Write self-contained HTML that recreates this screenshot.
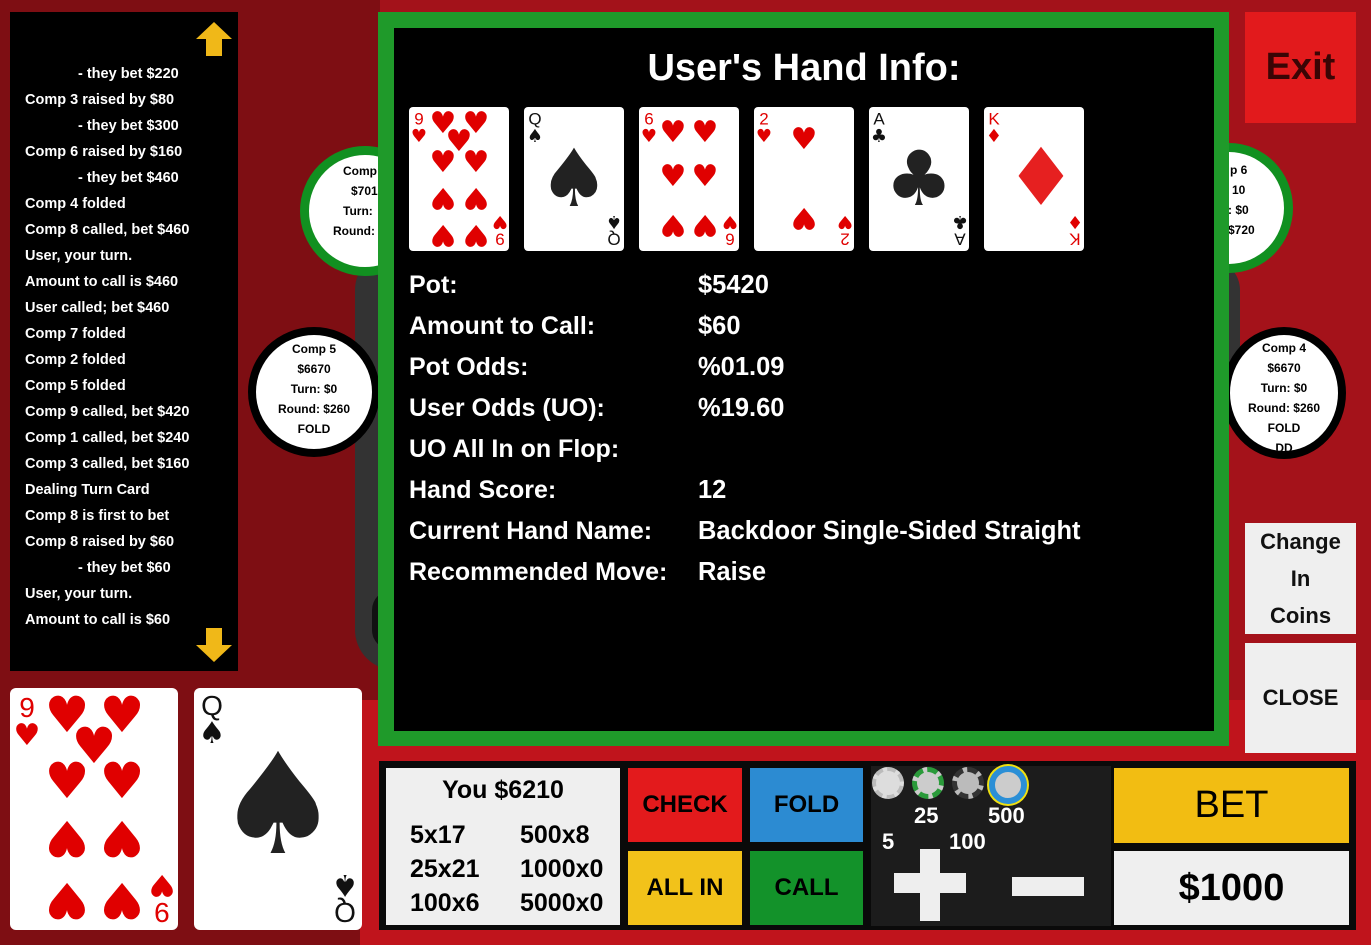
<!DOCTYPE html>
<html><head><meta charset="utf-8"><style>
*{margin:0;padding:0;box-sizing:border-box}
body{width:1371px;height:945px;overflow:hidden;position:relative;background:#a3121a;font-family:"Liberation Sans",Arial,sans-serif;font-weight:bold}
.a{position:absolute}
.log{left:10px;top:12px;width:228px;height:659px;background:#000;color:#fff;font-size:14.5px}
.log div{position:absolute;left:15px;white-space:nowrap}
.log .i{left:68px}
.circ{position:absolute;border-radius:50%;background:#fff;text-align:center;font-size:12px;color:#000;line-height:20px}
.card{position:absolute;background:#fff;border-radius:4px;overflow:hidden;font-family:"DejaVu Sans",sans-serif;font-weight:normal}
.card span{position:absolute;transform:translate(-50%,-50%);line-height:1}
.r{color:#e00000}.k{color:#111}
.flip{transform:translate(-50%,-50%) rotate(180deg)!important}
.row{position:absolute;left:409px;color:#fff;font-size:25px}
.val{position:absolute;left:698px;color:#fff;font-size:25.5px}
.btn{position:absolute;display:flex;align-items:center;justify-content:center;color:#000;font-size:24px}
</style></head><body>
<div class="a" style="left:0;top:0;width:380px;height:945px;background:#7e0e13"></div>
<div class="a" style="left:1230px;top:0;width:141px;height:945px;background:#a4121a"></div>
<div class="a" style="left:360px;top:700px;width:1011px;height:245px;background:#c0141c"></div>

<div class="a" style="left:355px;top:250px;width:40px;height:420px;background:#333;border-radius:40px 0 0 40px"></div>
<div class="a" style="left:1210px;top:260px;width:30px;height:150px;background:#333;border-radius:0 40px 40px 0"></div>

<div class="circ" style="left:300px;top:146px;width:130px;height:130px;border:9px solid #119020;padding-top:6px">
<div style="text-align:left;padding-left:34px">Comp</div><div style="text-align:left;padding-left:42px">$701</div><div style="text-align:left;padding-left:34px">Turn:</div><div style="text-align:left;padding-left:24px">Round: $</div></div>
<div class="circ" style="left:1165px;top:143px;width:128px;height:130px;border:9px solid #119020;padding-top:8px;text-align:left">
<div style="padding-left:56px">p 6</div><div style="padding-left:58px">10</div><div style="padding-left:54px">: $0</div><div style="padding-left:54px">$720</div></div>

<div class="circ" style="left:248px;top:327px;width:132px;height:130px;border:8px solid #000;padding-top:4px">Comp 5<br>$6670<br>Turn: $0<br>Round: $260<br>FOLD</div>
<div class="circ" style="left:1222px;top:327px;width:124px;height:132px;border:8px solid #000;padding-top:3px;overflow:hidden">Comp 4<br>$6670<br>Turn: $0<br>Round: $260<br>FOLD<br>DD</div>
<div class="a" style="left:372px;top:590px;width:20px;height:60px;background:#111;border-radius:20px 0 0 20px"></div>

<div class="a log">
<div class="i" style="top:54px">- they bet $220</div>
<div style="top:80px">Comp 3 raised by $80</div>
<div class="i" style="top:106px">- they bet $300</div>
<div style="top:132px">Comp 6 raised by $160</div>
<div class="i" style="top:158px">- they bet $460</div>
<div style="top:184px">Comp 4 folded</div>
<div style="top:210px">Comp 8 called, bet $460</div>
<div style="top:236px">User, your turn.</div>
<div style="top:262px">Amount to call is $460</div>
<div style="top:288px">User called; bet $460</div>
<div style="top:314px">Comp 7 folded</div>
<div style="top:340px">Comp 2 folded</div>
<div style="top:366px">Comp 5 folded</div>
<div style="top:392px">Comp 9 called, bet $420</div>
<div style="top:418px">Comp 1 called, bet $240</div>
<div style="top:444px">Comp 3 called, bet $160</div>
<div style="top:470px">Dealing Turn Card</div>
<div style="top:496px">Comp 8 is first to bet</div>
<div style="top:522px">Comp 8 raised by $60</div>
<div class="i" style="top:548px">- they bet $60</div>
<div style="top:574px">User, your turn.</div>
<div style="top:600px">Amount to call is $60</div>
<svg class="a" style="left:186px;top:10px" width="36" height="34"><polygon points="18,0 36,17 26,17 26,34 10,34 10,17 0,17" fill="#f0b818"/></svg>
<svg class="a" style="left:186px;top:616px" width="36" height="34"><polygon points="18,34 36,17 26,17 26,0 10,0 10,17 0,17" fill="#f0b818"/></svg>
</div>

<div class="a" style="left:378px;top:12px;width:851px;height:734px;background:#1f9a2a"></div>
<div class="a" style="left:394px;top:28px;width:820px;height:703px;background:#000"></div>
<div class="a" style="left:394px;top:47px;width:820px;text-align:center;color:#fff;font-size:38px">User's Hand Info:</div>

<div class="card" style="left:409px;top:107px;width:100px;height:144px">
<span class="r" style="left:10px;top:12px;font-family:'Liberation Sans';font-size:17px">9</span><span class="r" style="left:10px;top:30px;font-size:18px">♥</span>
<span class="r" style="left:34px;top:17px;font-size:30px">♥</span><span class="r" style="left:67px;top:17px;font-size:30px">♥</span><span class="r" style="left:50px;top:35px;font-size:30px">♥</span>
<span class="r" style="left:34px;top:56px;font-size:30px">♥</span><span class="r" style="left:67px;top:56px;font-size:30px">♥</span>
<span class="r flip" style="left:34px;top:90px;font-size:30px">♥</span><span class="r flip" style="left:67px;top:90px;font-size:30px">♥</span>
<span class="r flip" style="left:34px;top:127px;font-size:30px">♥</span><span class="r flip" style="left:67px;top:127px;font-size:30px">♥</span>
<span class="r flip" style="left:91px;top:114px;font-size:18px">♥</span><span class="r flip" style="left:91px;top:132px;font-family:'Liberation Sans';font-size:17px">9</span>
</div>
<div class="card" style="left:524px;top:107px;width:100px;height:144px">
<span class="k" style="left:11px;top:12px;font-family:'Liberation Sans';font-size:17px">Q</span><span class="k" style="left:11px;top:30px;font-size:18px">♠</span>
<span style="left:50px;top:72px;font-size:80px;color:#222">♠</span>
<span class="k flip" style="left:90px;top:114px;font-size:18px">♠</span><span class="k flip" style="left:90px;top:132px;font-family:'Liberation Sans';font-size:17px">Q</span>
</div>
<div class="card" style="left:639px;top:107px;width:100px;height:144px">
<span class="r" style="left:10px;top:12px;font-family:'Liberation Sans';font-size:17px">6</span><span class="r" style="left:10px;top:30px;font-size:18px">♥</span>
<span class="r" style="left:34px;top:26px;font-size:30px">♥</span><span class="r" style="left:66px;top:26px;font-size:30px">♥</span>
<span class="r" style="left:34px;top:70px;font-size:30px">♥</span><span class="r" style="left:66px;top:70px;font-size:30px">♥</span>
<span class="r flip" style="left:34px;top:117px;font-size:30px">♥</span><span class="r flip" style="left:66px;top:117px;font-size:30px">♥</span>
<span class="r flip" style="left:91px;top:114px;font-size:18px">♥</span><span class="r flip" style="left:91px;top:132px;font-family:'Liberation Sans';font-size:17px">6</span>
</div>
<div class="card" style="left:754px;top:107px;width:100px;height:144px">
<span class="r" style="left:10px;top:12px;font-family:'Liberation Sans';font-size:17px">2</span><span class="r" style="left:10px;top:30px;font-size:18px">♥</span>
<span class="r" style="left:50px;top:33px;font-size:30px">♥</span>
<span class="r flip" style="left:50px;top:110px;font-size:30px">♥</span>
<span class="r flip" style="left:91px;top:114px;font-size:18px">♥</span><span class="r flip" style="left:91px;top:132px;font-family:'Liberation Sans';font-size:17px">2</span>
</div>
<div class="card" style="left:869px;top:107px;width:100px;height:144px">
<span class="k" style="left:10px;top:12px;font-family:'Liberation Sans';font-size:17px">A</span><span class="k" style="left:10px;top:30px;font-size:18px">♣</span>
<span style="left:50px;top:72px;font-size:76px;color:#222">♣</span>
<span class="k flip" style="left:91px;top:114px;font-size:18px">♣</span><span class="k flip" style="left:91px;top:132px;font-family:'Liberation Sans';font-size:17px">A</span>
</div>
<div class="card" style="left:984px;top:107px;width:100px;height:144px">
<span class="r" style="left:10px;top:12px;font-family:'Liberation Sans';font-size:17px">K</span><span class="r" style="left:10px;top:30px;font-size:18px">♦</span>
<span style="left:57px;top:71px;font-size:80px;color:#e62020">♦</span>
<span class="r flip" style="left:91px;top:114px;font-size:18px">♦</span><span class="r flip" style="left:91px;top:132px;font-family:'Liberation Sans';font-size:17px">K</span>
</div>

<div class="row" style="top:271px">Pot:</div><div class="val" style="top:271px">$5420</div>
<div class="row" style="top:312px">Amount to Call:</div><div class="val" style="top:312px">$60</div>
<div class="row" style="top:353px">Pot Odds:</div><div class="val" style="top:353px">%01.09</div>
<div class="row" style="top:394px">User Odds (UO):</div><div class="val" style="top:394px">%19.60</div>
<div class="row" style="top:435px">UO All In on Flop:</div>
<div class="row" style="top:476px">Hand Score:</div><div class="val" style="top:476px">12</div>
<div class="row" style="top:517px">Current Hand Name:</div><div class="val" style="top:517px">Backdoor Single-Sided Straight</div>
<div class="row" style="top:558px">Recommended Move:</div><div class="val" style="top:558px">Raise</div>

<div class="btn" style="left:1245px;top:12px;width:111px;height:111px;background:#e21a1c;color:#3a0505;font-size:38px">Exit</div>
<div class="btn" style="left:1245px;top:523px;width:111px;height:111px;background:#efefef;font-size:22px;line-height:37px;text-align:center;flex-direction:column;color:#111">Change<br>In<br>Coins</div>
<div class="btn" style="left:1245px;top:643px;width:111px;height:110px;background:#efefef;font-size:22px;color:#111">CLOSE</div>

<div class="card" style="left:10px;top:688px;width:168px;height:242px;border-radius:6px">
<span class="r" style="left:17px;top:20px;font-family:'Liberation Sans';font-size:28px">9</span><span class="r" style="left:17px;top:48px;font-size:30px">♥</span>
<span class="r" style="left:57px;top:27px;font-size:50px">♥</span><span class="r" style="left:112px;top:27px;font-size:50px">♥</span><span class="r" style="left:84px;top:58px;font-size:50px">♥</span>
<span class="r" style="left:57px;top:93px;font-size:50px">♥</span><span class="r" style="left:112px;top:93px;font-size:50px">♥</span>
<span class="r flip" style="left:57px;top:150px;font-size:50px">♥</span><span class="r flip" style="left:112px;top:150px;font-size:50px">♥</span>
<span class="r flip" style="left:57px;top:212px;font-size:50px">♥</span><span class="r flip" style="left:112px;top:212px;font-size:50px">♥</span>
<span class="r flip" style="left:152px;top:196px;font-size:30px">♥</span><span class="r flip" style="left:152px;top:224px;font-family:'Liberation Sans';font-size:28px">9</span>
</div>
<div class="card" style="left:194px;top:688px;width:168px;height:242px;border-radius:6px">
<span class="k" style="left:18px;top:18px;font-family:'Liberation Sans';font-size:28px">Q</span><span class="k" style="left:18px;top:46px;font-size:30px">♠</span>
<span style="left:84px;top:118px;font-size:140px;color:#222">♠</span>
<span class="k flip" style="left:151px;top:196px;font-size:30px">♠</span><span class="k flip" style="left:151px;top:224px;font-family:'Liberation Sans';font-size:28px">Q</span>
</div>

<div class="a" style="left:379px;top:761px;width:977px;height:169px;background:#0a0a0a"></div>
<div class="a" style="left:386px;top:768px;width:234px;height:157px;background:#efefef;color:#000;font-size:25px">
<div class="a" style="left:0;top:8px;width:234px;text-align:center">You $6210</div>
<div class="a" style="left:24px;top:50px;line-height:34px">5x17<br>25x21<br>100x6</div>
<div class="a" style="left:134px;top:50px;line-height:34px">500x8<br>1000x0<br>5000x0</div>
</div>
<div class="btn" style="left:628px;top:768px;width:114px;height:74px;background:#e31a1c">CHECK</div>
<div class="btn" style="left:750px;top:768px;width:113px;height:74px;background:#2c8bd2">FOLD</div>
<div class="btn" style="left:628px;top:851px;width:114px;height:74px;background:#f2c21a">ALL IN</div>
<div class="btn" style="left:750px;top:851px;width:113px;height:74px;background:#13922a">CALL</div>
<div class="a" style="left:871px;top:766px;width:240px;height:160px;background:#1c1c1c"></div>
<div class="a" style="left:872px;top:767px;width:32px;height:32px;border-radius:50%;background:#ddd;border:4px dashed #bbb"></div>
<div class="a" style="left:912px;top:767px;width:32px;height:32px;border-radius:50%;background:#ccc;border:5px dashed #2a9a3a"></div>
<div class="a" style="left:952px;top:767px;width:32px;height:32px;border-radius:50%;background:#bbb;border:5px dashed #333"></div>
<div class="a" style="left:989px;top:766px;width:38px;height:38px;border-radius:50%;background:#ccc;border:6px solid #2b8fd6;box-shadow:0 0 0 2px #f0e010"></div>
<div class="a" style="left:914px;top:803px;color:#fff;font-size:22px">25</div>
<div class="a" style="left:988px;top:803px;color:#fff;font-size:22px">500</div>
<div class="a" style="left:882px;top:829px;color:#fff;font-size:22px">5</div>
<div class="a" style="left:949px;top:829px;color:#fff;font-size:22px">100</div>
<div class="a" style="left:894px;top:873px;width:72px;height:20px;background:#eee"></div>
<div class="a" style="left:920px;top:849px;width:20px;height:72px;background:#eee"></div>
<div class="a" style="left:1012px;top:877px;width:72px;height:19px;background:#eee"></div>
<div class="btn" style="left:1114px;top:768px;width:235px;height:75px;background:#f2bd12;font-weight:normal;font-size:38px">BET</div>
<div class="btn" style="left:1114px;top:851px;width:235px;height:74px;background:#efefef;font-size:38px">$1000</div>
</body></html>
